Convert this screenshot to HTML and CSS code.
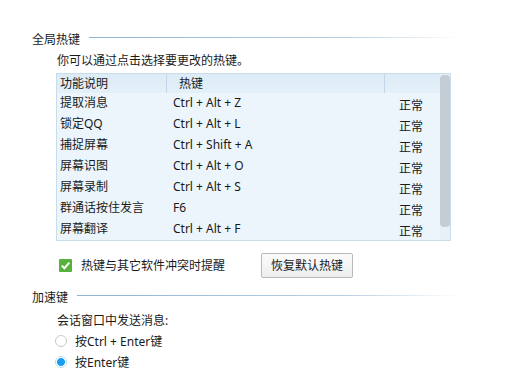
FILE: index.html
```html
<!DOCTYPE html>
<html lang="zh-CN">
<head>
    <meta charset="UTF-8">
    <title>热键设置</title>
    <link rel="stylesheet" href="styles.css">
</head>
<body>

    <div class="group-head first">
        <span>全局热键</span>
        <i class="rule"></i>
    </div>
    <p class="hint">你可以通过点击选择要更改的热键。</p>

    <div class="hotkeys">
        <div class="list">
            <div class="row head">
                <span>功能说明</span>
                <span class="key">热键</span>
                <span class="state"></span>
            </div>
            <div class="row"><span>提取消息</span><span class="key">Ctrl + Alt + Z</span><span class="state">正常</span></div>
            <div class="row"><span>锁定QQ</span><span class="key">Ctrl + Alt + L</span><span class="state">正常</span></div>
            <div class="row"><span>捕捉屏幕</span><span class="key">Ctrl + Shift + A</span><span class="state">正常</span></div>
            <div class="row"><span>屏幕识图</span><span class="key">Ctrl + Alt + O</span><span class="state">正常</span></div>
            <div class="row"><span>屏幕录制</span><span class="key">Ctrl + Alt + S</span><span class="state">正常</span></div>
            <div class="row"><span>群通话按住发言</span><span class="key">F6</span><span class="state">正常</span></div>
            <div class="row"><span>屏幕翻译</span><span class="key">Ctrl + Alt + F</span><span class="state">正常</span></div>
        </div>
        <div class="scroll"><div class="thumb"></div></div>
    </div>

    <div class="options">
        <label class="check">
            <svg width="13" height="13" viewBox="0 0 13 13">
                <rect width="13" height="13" rx="1" fill="#56b23a"/>
                <path d="M2.8 6.6 L5.4 9.2 L10.3 3.6" fill="none" stroke="#fff" stroke-width="2"/>
            </svg>
            热键与其它软件冲突时提醒
        </label>
        <button class="btn">恢复默认热键</button>
    </div>

    <div class="group-head">
        <span>加速键</span>
        <i class="rule"></i>
    </div>
    <p class="hint lower">会话窗口中发送消息:</p>
    <label class="radio"><span class="dot"></span>按Ctrl + Enter键</label>
    <label class="radio"><span class="dot on"></span>按Enter键</label>

</body>
</html>
```

FILE: styles.css
```css
body {
    margin: 0;
    background: #fff;
    color: #1a1a1a;
    font-family: "Noto Sans", "Noto Sans CJK SC", sans-serif;
    font-size: 12px;
}

.group-head {
    display: flex;
    align-items: center;
    height: 18px;
    padding-left: 32px;
    margin-top: 10px;
}
.group-head.first {
    margin-top: 30px;
}
.group-head .rule {
    flex: 1;
    height: 1px;
    margin: -4px 70px 0 9px;
    background: linear-gradient(to right, #8fb3d1, #b9cfe1 70%, #fff);
}

.hint {
    margin: 4px 0 0 57px;
    height: 18px;
    line-height: 18px;
}
.hint.lower {
    margin-top: 6px;
}

.hotkeys {
    display: flex;
    width: 393px;
    height: 166px;
    margin: 3px 0 0 56px;
    border: 1px solid #c9dcea;
    background: #ebf5fb;
}
.list {
    flex: 1;
}
.row {
    display: grid;
    grid-template-columns: 109px 219px 1fr;
    height: 21px;
    line-height: 20px;
}
.row span {
    padding-left: 3px;
}
.row .key {
    padding-left: 7px;
}
.row .state {
    padding-left: 14px;
    line-height: 25px;
}
.row.head {
    height: 19px;
    line-height: 19px;
    background: linear-gradient(#dcebf6, #e4f0f8);
}
.row.head .key,
.row.head .state {
    border-left: 1px solid #c1d6e6;
    padding-left: 12px;
}
.row.head .state {
    margin-left: -1px;
}

.scroll {
    width: 10px;
    padding: 1px 0;
    background: #e6f0f6;
}
.thumb {
    height: 152px;
    border-radius: 4px;
    background: #c4cdd5;
}

.options {
    display: flex;
    align-items: center;
    margin: 11px 0 0 59px;
    height: 26px;
}
.check {
    display: flex;
    align-items: center;
    gap: 9px;
    width: 202px;
}
.btn {
    font: inherit;
    color: #1a1a1a;
    width: 92px;
    height: 25px;
    padding: 0;
    border: 1px solid #b9b9b9;
    border-radius: 2px;
    background: linear-gradient(#fbfbfb, #eeeeee);
}

.radio {
    display: flex;
    align-items: center;
    gap: 8px;
    height: 21px;
    margin-left: 55px;
}
.dot {
    box-sizing: border-box;
    width: 12px;
    height: 12px;
    border-radius: 50%;
    border: 1px solid #c9c9c9;
    background: #fff;
}
.dot.on {
    border-color: #b5dcf5;
    background: radial-gradient(circle, #1a9ff0 0 3.6px, #fff 4.3px);
}
```
